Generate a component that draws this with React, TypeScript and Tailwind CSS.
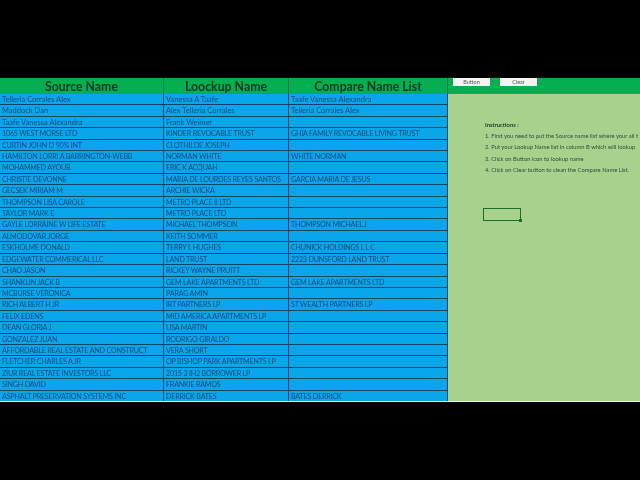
const rows: [string, string, string][] = [
  ["Telleria Corrales Alex", "Vanessa A Taafe", "Taafe Vanessa Alexandra"],
  ["Maddock Dan", "Alex Telleria Corrales", "Telleria Corrales Alex"],
  ["Taafe Vanessa Alexandra", "Frank Weimer", ""],
  ["1065 WEST MORSE LTD", "KINDER REVOCABLE TRUST", "GHIA FAMILY REVOCABLE LIVING TRUST"],
  ["CURTIN JOHN D 90% INT", "CLOTHILDE JOSEPH", ""],
  ["HAMILTON LORRI A BARRINGTON-WEBB", "NORMAN WHITE", "WHITE NORMAN"],
  ["MOHAMMED AYOUB", "ERIC K ACQUAH", ""],
  ["CHRISTIE DEVONNE", "MARIA DE LOURDES REYES SANTOS", "GARCIA MARIA DE JESUS"],
  ["GECSEK MIRIAM M", "ARCHIE WICKA", ""],
  ["THOMPSON LISA CAROLE", "METRO PLACE II LTD", ""],
  ["TAYLOR MARK E", "METRO PLACE LTD", ""],
  ["GAYLE LORRAINE W LIFE ESTATE", "MICHAEL THOMPSON", "THOMPSON MICHAEL J"],
  ["ALMODOVAR JORGE", "KEITH SOMMER", ""],
  ["ESKHOLME DONALD", "TERRY L HUGHES", "CHUNICK HOLDINGS L L C"],
  ["EDGEWATER COMMERICAL LLC", "LAND TRUST", "2223 DUNSFORD LAND TRUST"],
  ["CHAO JASON", "RICKEY WAYNE PRUITT", ""],
  ["SHANKLIN JACK B", "GEM LAKE APARTMENTS LTD", "GEM LAKE APARTMENTS LTD"],
  ["MCBURSE VERONICA", "PARAG AMIN", ""],
  ["RICH ALBERT H JR", "IRT PARTNERS LP", "ST WEALTH PARTNERS LP"],
  ["FELIX EDENS", "MID AMERICA APARTMENTS LP", ""],
  ["DEAN GLORIA J", "LISA MARTIN", ""],
  ["GONZALEZ JUAN", "RODRIGO GIRALDO", ""],
  ["AFFORDABLE REAL ESTATE AND CONSTRUCT", "VERA SHORT", ""],
  ["FLETCHER CHARLES A JR", "OP BISHOP PARK APARTMENTS LP", ""],
  ["ZIUR REAL ESTATE INVESTORS LLC", "2015 3 IH2 BORROWER LP", ""],
  ["SINGH DAVID", "FRANKIE RAMOS", ""],
  ["ASPHALT PRESERVATION SYSTEMS INC", "DERRICK BATES", "BATES DERRICK"],
];

const steps = [
  "1. First you need to put the Source name list where your all t",
  "2. Put your Lookup Name list in column B which will lookup",
  "3. Click on Button icon to lookup name",
  "4. Click on Clear button to clean the Compare Name List.",
];

const font = "font-['Lato','Open_Sans',sans-serif]";

function Cell({ text, width }: { text: string; width: string }) {
  const caps = text === text.toUpperCase();
  const type = caps ? "text-[7.2px] tracking-[-0.22px]" : "text-[7.5px]";
  return (
    <div className={`${width} ${type} border-r border-[#0d4468] pl-[2px] leading-[12.4px] text-[#154a80] whitespace-nowrap overflow-hidden blur-[0.25px]`}>
      {text}
    </div>
  );
}

function Head({ text, width }: { text: string; width: string }) {
  return (
    <div className={`${width} border-r border-[#0a7a44] pt-[2px] flex items-center justify-center text-[12.3px] font-bold text-[#0b3a20] blur-[0.25px]`}>
      {text}
    </div>
  );
}

export default function App() {
  return (
    <div className={`w-[640px] h-[480px] bg-black overflow-hidden flex flex-col pt-[78px] ${font}`}>
      <div className="h-[324px] w-[640px] border-b border-[#dfeef5] overflow-hidden flex flex-col">
        <div className="flex h-[16px] shrink-0 bg-[#06ae52]">
          <Head text="Source Name" width="w-[164px]" />
          <Head text="Loockup Name" width="w-[125px]" />
          <Head text="Compare Name List" width="w-[159px]" />
          <div className="flex-1 flex items-start pl-[5px] gap-[10px]">
            <div className="w-[37px] h-[8px] bg-[#f4f6f4] flex items-center justify-center text-[5.5px] text-[#555] blur-[0.2px]">Button</div>
            <div className="w-[37px] h-[8px] bg-[#f4f6f4] flex items-center justify-center text-[5.5px] text-[#555] blur-[0.2px]">Clear</div>
          </div>
        </div>
        <div className="flex flex-1 min-h-0">
          <div className="w-[448px] shrink-0 bg-[#0aa6ea] overflow-hidden">
            {rows.map((r, i) => (
              <div key={i} className="flex h-[11.42px] border-b border-[#0d4468]">
                <Cell text={r[0]} width="w-[164px]" />
                <Cell text={r[1]} width="w-[125px]" />
                <Cell text={r[2]} width="w-[159px]" />
              </div>
            ))}
          </div>
          <div className="flex-1 min-w-0 bg-[#a9d18e] pl-[37px] pt-[24.5px] overflow-hidden">
            <div className="h-[11.42px] text-[5.8px] leading-[11px] font-bold text-[#1f3a25] whitespace-nowrap blur-[0.2px]">Instructions :</div>
            {steps.map((s) => (
              <div key={s} className="h-[11.42px] text-[5.8px] leading-[11px] text-[#2f4d36] whitespace-nowrap blur-[0.2px]">{s}</div>
            ))}
            <div className="relative mt-[32px] -ml-[2px] w-[38px] h-[13px] border border-[#1f6b2c]">
              <div className="absolute -right-[2px] -bottom-[2px] w-[3px] h-[3px] bg-[#1f6b2c]"></div>
            </div>
          </div>
        </div>
      </div>
    </div>
  );
}
